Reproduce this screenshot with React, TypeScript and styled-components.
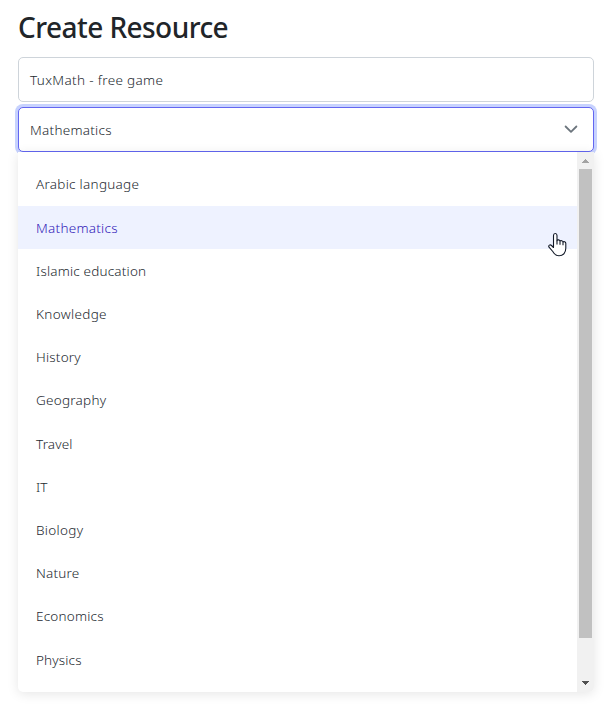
import React from "react";
import styled, { createGlobalStyle } from "styled-components";

const GlobalStyle = createGlobalStyle`
  * { box-sizing: border-box; }
  body {
    margin: 0;
    background: #fff;
    color: #23292f;
    font-family: "Segoe UI", "Noto Sans", "Open Sans", sans-serif;
    font-size: 13.5px;
    font-weight: 350;
    overflow: hidden;
  }
`;

const Page = styled.main`
  height: 709px;
  padding: 8px 15px 0 18px;
  display: flex;
  flex-direction: column;
`;

const Title = styled.h1`
  margin: 0 0 11px;
  height: 38px;
  font-size: 28px;
  line-height: 38px;
  font-weight: 500;
  letter-spacing: -0.55px;
  color: #212529;
  white-space: nowrap;
`;

const Field = styled.div<{ $focused?: boolean }>`
  display: flex;
  align-items: center;
  justify-content: space-between;
  flex: none;
  height: 45px;
  margin-bottom: ${(p) => (p.$focused ? 0 : 5)}px;
  padding: 0 14px 0 11px;
  border: 1px solid ${(p) => (p.$focused ? "#6366f1" : "#ced4da")};
  border-radius: 5px;
  background: #fff;
  box-shadow: ${(p) => (p.$focused ? "0 0 0 3px #c7d2fe" : "none")};
  line-height: 20px;
`;

const Label = styled.span<{ $spacing?: number }>`
  letter-spacing: ${(p) => p.$spacing ?? 0}px;
  white-space: nowrap;
`;

const Panel = styled.div`
  position: relative;
  display: flex;
  flex: none;
  height: 540px;
  background: #fff;
  border-radius: 0 0 5px 5px;
  box-shadow: 0 2px 12px rgba(0, 0, 0, 0.1);
  overflow: hidden;
`;

const Options = styled.ul`
  flex: 1;
  margin: 0;
  padding: 10.8px 0 0;
  list-style: none;
`;

const Option = styled.li<{ $active?: boolean }>`
  display: flex;
  align-items: center;
  height: 43.2px;
  padding: 0.2px 0 0 18px;
  line-height: 20px;
  color: ${(p) => (p.$active ? "#3120b8" : "#23292f")};
  background: ${(p) => (p.$active ? "#eef2ff" : "transparent")};
`;

const Scrollbar = styled.div`
  display: flex;
  flex-direction: column;
  align-items: center;
  width: 17px;
  background: #f1f1f1;
`;

const Arrow = styled.svg`
  display: block;
  flex: none;
  width: 17px;
  height: 17px;
`;

const Thumb = styled.div`
  width: 13px;
  height: 469px;
  margin-bottom: auto;
  background: #c1c1c1;
`;

const Chevron = styled.svg`
  display: block;
  width: 16px;
  height: 16px;
  margin-bottom: 2px;
`;

const Pointer = styled.svg`
  position: absolute;
  left: 530px;
  top: 80px;
  width: 20px;
  height: 26px;
`;

const subjects: { name: string; spacing: number }[] = [
  { name: "Arabic language", spacing: 0.28 },
  { name: "Mathematics", spacing: 0.26 },
  { name: "Islamic education", spacing: 0.19 },
  { name: "Knowledge", spacing: 0.34 },
  { name: "History", spacing: 0.2 },
  { name: "Geography", spacing: 0.25 },
  { name: "Travel", spacing: 0.15 },
  { name: "IT", spacing: 0 },
  { name: "Biology", spacing: 0.3 },
  { name: "Nature", spacing: 0.22 },
  { name: "Economics", spacing: 0.22 },
  { name: "Physics", spacing: 0.15 },
];

export default function App() {
  return (
    <>
      <GlobalStyle />
      <Page>
        <Title>Create Resource</Title>
        <Field>
          <Label $spacing={0.34}>TuxMath - free game</Label>
        </Field>
        <Field $focused>
          <Label $spacing={0.26}>Mathematics</Label>
          <Chevron viewBox="0 0 16 16" fill="none" stroke="#6c757d" strokeWidth="1.8" strokeLinecap="round" strokeLinejoin="round">
            <path d="M2.6 5.5 8 10.8 13.4 5.5" />
          </Chevron>
        </Field>
        <Panel>
          <Options>
            {subjects.map((s) => (
              <Option key={s.name} $active={s.name === "Mathematics"}>
                <Label $spacing={s.spacing}>{s.name}</Label>
              </Option>
            ))}
          </Options>
          <Scrollbar>
            <Arrow viewBox="0 0 17 17" shapeRendering="crispEdges">
              <path d="M8 7h1v1h1v1h1v1h1v1H5v-1h1V9h1V8h1z" fill="#a3a3a3" />
            </Arrow>
            <Thumb />
            <Arrow viewBox="0 0 17 17" shapeRendering="crispEdges">
              <path d="M5 6h7v1h-1v1h-1v1H9v1H8V9H7V8H6V7H5z" fill="#505050" />
            </Arrow>
          </Scrollbar>
          <Pointer viewBox="0 0 20 26" fill="#fff" stroke="#111827" strokeWidth="1.1" strokeLinejoin="round">
            <path d="M5.500 15.500V3.500c0-2.600 3.500-2.600 3.500 0v5.200c.4-1.300 3-1 3 .6.6-1.200 3-.7 3 .8.7-1 2.800-.4 2.800 1.200v5c0 4-2.400 7.500-6.800 7.500-3.700 0-5-2-6.200-4.300L1 15.200c-1-1.900 1.200-3 2.500-1.700z" />
            <path d="M9 8.500v4M12 9.500v3.200M15 10.200v3" fill="none" />
          </Pointer>
        </Panel>
      </Page>
    </>
  );
}
